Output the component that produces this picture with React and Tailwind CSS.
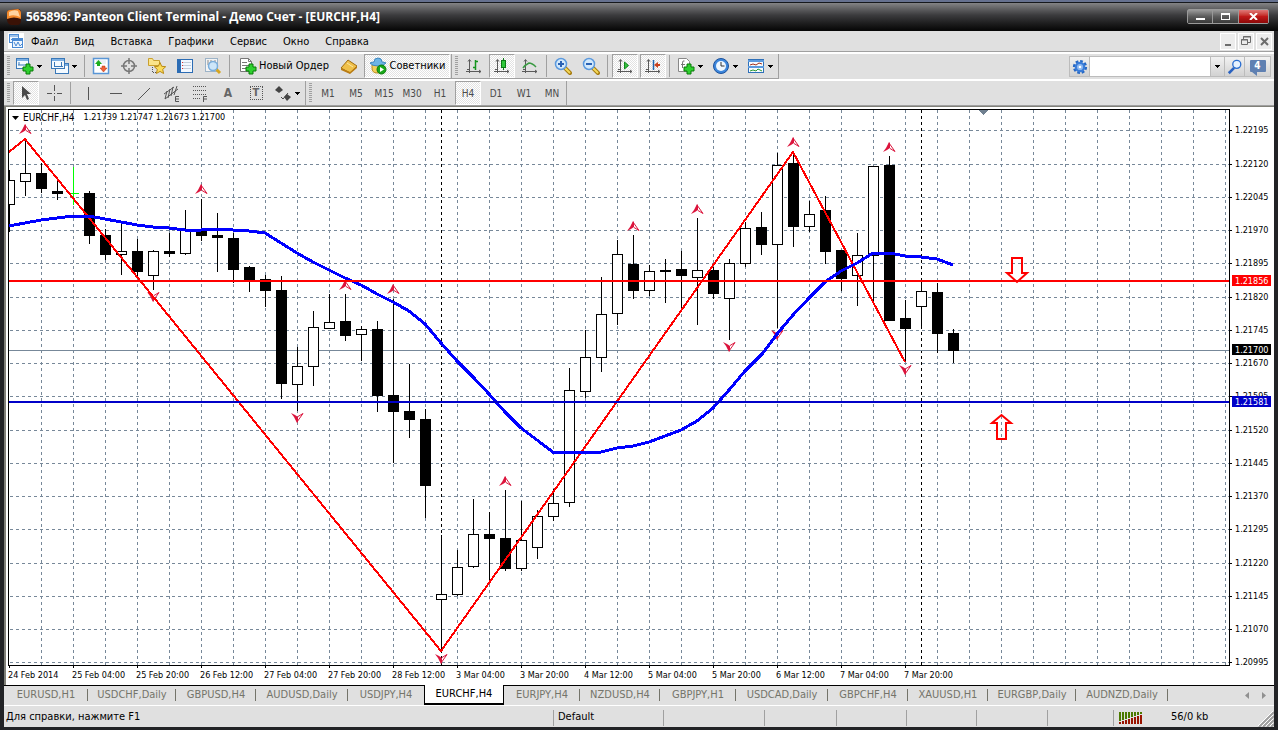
import React from 'react'
import clsx from 'clsx'

const MENU = ['Файл', 'Вид', 'Вставка', 'Графики', 'Сервис', 'Окно', 'Справка']
const TIMEFRAMES = ['M1', 'M5', 'M15', 'M30', 'H1', 'H4', 'D1', 'W1', 'MN']

const TABS = [
  ['EURUSD,H1', 'w-[84px]'],
  ['USDCHF,Daily', 'w-[88px]'],
  ['GBPUSD,H4', 'w-[80px]'],
  ['AUDUSD,Daily', 'w-[92px]'],
  ['USDJPY,H4', 'w-[76px]'],
  ['EURCHF,H4', 'w-[80px]'],
  ['EURJPY,H4', 'w-[76px]'],
  ['NZDUSD,H4', 'w-[80px]'],
  ['GBPJPY,H1', 'w-[76px]'],
  ['USDCAD,Daily', 'w-[92px]'],
  ['GBPCHF,H4', 'w-[80px]'],
  ['XAUUSD,H1', 'w-[80px]'],
  ['EURGBP,Daily', 'w-[88px]'],
  ['AUDNZD,Daily', 'w-[92px]'],
]
const ACTIVE_TAB = 'EURCHF,H4'

const TIMES = [
  '24 Feb 2014', '25 Feb 04:00', '25 Feb 20:00', '26 Feb 12:00', '27 Feb 04:00',
  '27 Feb 20:00', '28 Feb 12:00', '3 Mar 04:00', '3 Mar 20:00', '4 Mar 12:00',
  '5 Mar 04:00', '5 Mar 20:00', '6 Mar 12:00', '7 Mar 04:00', '7 Mar 20:00',
]

const PRICES = [
  [130, '1.22195'], [164, '1.22120'], [197, '1.22045'], [230, '1.21970'], [263, '1.21895'],
  [297, '1.21820'], [330, '1.21745'], [363, '1.21670'], [396, '1.21595'], [430, '1.21520'],
  [463, '1.21445'], [496, '1.21370'], [529, '1.21295'], [563, '1.21220'], [596, '1.21145'],
  [629, '1.21070'], [662, '1.20995'],
]

// high, low, body top, body bottom, bullish; one bar every 16px
const BARS = [
  [170, 232, 180, 205, 1], [140, 196, 173, 182, 1], [163, 193, 173, 189, 0], [180, 200, 191, 194, 0],
  null,
  [191, 244, 193, 236, 0], [229, 260, 235, 255, 0], [224, 275, 251, 255, 1], [239, 276, 251, 272, 0],
  [250, 290, 251, 276, 1], [233, 257, 251, 254, 0], [210, 255, 230, 254, 1], [199, 241, 231, 236, 0],
  [213, 272, 235, 238, 0], [233, 283, 238, 270, 0], [266, 292, 267, 280, 0], [275, 307, 279, 291, 0],
  [276, 399, 290, 384, 0], [347, 411, 366, 385, 1], [311, 386, 327, 367, 1], [294, 329, 322, 329, 1],
  [294, 341, 321, 336, 0], [326, 361, 329, 335, 1], [321, 412, 329, 396, 0], [299, 463, 395, 412, 0],
  [364, 438, 411, 420, 0], [409, 518, 419, 486, 0], [535, 651, 594, 600, 1], [550, 596, 567, 595, 1],
  [499, 568, 534, 567, 1], [512, 582, 534, 539, 0], [490, 571, 538, 569, 0], [501, 571, 540, 569, 1],
  [510, 559, 516, 548, 1], [489, 521, 503, 517, 1], [368, 507, 390, 503, 1], [330, 398, 357, 392, 1],
  [277, 372, 314, 358, 1], [240, 325, 254, 314, 1], [235, 299, 264, 291, 0], [265, 296, 271, 291, 1],
  [259, 303, 270, 272, 0], [251, 309, 269, 276, 0], [218, 325, 270, 278, 1], [267, 299, 270, 294, 0],
  [259, 340, 263, 299, 1], [222, 267, 228, 264, 1], [212, 255, 227, 245, 0], [153, 328, 165, 245, 1],
  [152, 247, 163, 227, 0], [201, 232, 214, 227, 1], [196, 264, 210, 252, 0], [250, 291, 250, 279, 0],
  [233, 306, 255, 276, 1], [166, 302, 166, 256, 1], [156, 321, 165, 321, 0], [300, 362, 318, 329, 0],
  [282, 328, 291, 307, 1], [283, 353, 292, 334, 0], [329, 363, 333, 351, 0],
]

const MA = '9,226 25,223 41,220 57,218 73,216 89,216 105,219 121,222 137,225 153,227 169,228 185,230 201,230 217,229 233,230 249,231 265,233 281,243 297,253 313,262 329,270 345,278 361,285 377,294 393,302 409,311 425,324 441,343 457,361 473,377 489,394 505,412 521,428 537,440 553,452 569,452 585,452 601,452 617,448 633,446 649,442 665,436 681,430 697,421 713,408 729,390 745,371 763,353 777,334 793,315 809,298 825,282 841,271 857,263 873,253 890,253 905,256 921,257 937,259 953,265'

const UP = [[25, 129], [201, 189], [345, 285], [393, 289], [505, 481], [633, 226], [697, 209], [793, 142], [889, 147]]
const DOWN = [[153, 297], [297, 418], [441, 659], [729, 347], [777, 335], [905, 370]]

/* ---------- small pieces ---------- */

function Grip() {
  return (
    <div className="ml-[3px] mr-[2px] my-[2px] w-[3px] self-stretch bg-[repeating-linear-gradient(to_bottom,#a0a0a0_0_1px,#e0e0e0_1px_2px)]" />
  )
}

function Sep({ className = 'ml-[2px] mr-[3px]' }) {
  return <div className={clsx('my-px w-px self-stretch bg-[#a0a0a0]', className)} />
}

function Tool({ label, pressed, className, caret, children }) {
  return (
    <button
      aria-label={label}
      className={clsx(
        'mx-px flex h-6 shrink-0 items-center border',
        className || (caret ? 'w-[33px]' : 'w-[26px]'),
        caret ? 'pl-[2px]' : 'justify-center',
        pressed
          ? 'border-[#a0a0a0] border-r-white border-b-white bg-[repeating-conic-gradient(#ffffff_0_25%,#e2e2e2_0_50%)] bg-[length:2px_2px]'
          : 'border-transparent'
      )}
    >
      {children}
      {caret && <Caret />}
    </button>
  )
}

function Caret() {
  return (
    <svg width="5" height="3" className="ml-[3px] shrink-0" shapeRendering="crispEdges">
      <path d="M0 0H5V1H4V2H3V3H2V2H1V1H0Z" fill="#000" />
    </svg>
  )
}

function Icon({ children, size = 18 }) {
  return (
    <svg width={size} height={size} viewBox="0 0 18 18" className="shrink-0">
      {children}
    </svg>
  )
}

function Plus({ x, y }) {
  return (
    <path
      transform={`translate(${x} ${y})`}
      d="M3.500 .5h4v3h3v4h-3v3h-4v-3h-3v-4h3z"
      fill="#2fd02f"
      stroke="#087a08"
    />
  )
}

function Win({ x, y, w, h }) {
  return (
    <g>
      <rect x={x + 0.5} y={y + 0.5} width={w} height={h} fill="#f4faff" stroke="#3a78b8" />
      <rect x={x + 1} y={y + 1} width={w - 1} height="2" fill="#7db0e4" />
    </g>
  )
}

function Axes() {
  return <path d="M4.500 3v13M1 14.500h15M3 4.500l1.500-2 1.500 2M14 13l2 1.500-2 1.500M2 12.500h2" fill="none" stroke="#5a5a5a" />
}

function Lens({ sign }) {
  return (
    <Icon>
      <path d="M11 11l5 5" stroke="#a67c10" strokeWidth="4" strokeLinecap="round" />
      <path d="M11.500 11.500l4 4" stroke="#f5d95a" strokeWidth="2" strokeLinecap="round" />
      <circle cx="7" cy="7" r="5.500" fill="#d3e9fb" stroke="#5c9ade" strokeWidth="1.500" />
      <path d={sign === '+' ? 'M4 7h6M7 4v6' : 'M4 7h6'} stroke="#2a62b4" strokeWidth="2" />
    </Icon>
  )
}

/* ---------- title + menu ---------- */

function TitleBar() {
  return (
    <header className="flex h-[31px] items-center border-t-2 border-[#66718f] bg-linear-to-b from-[#8a8a8c] via-[#3c3c3e] via-45% to-[#060606] pl-[6px] pr-[9px] shadow-[inset_0_1px_0_#16181c]">
      <svg width="16" height="18" viewBox="0 0 16 18">
        <path d="M1 5Q1 2 4 2L12 1Q15 1 15 5V13Q15 16 12 17L5 17Q1 16 1 11Z" fill="#3a1206" />
        <path d="M1 5Q1 2 4 2L12 1Q15 2 15 5V11Q8 8 1 11Z" fill="#f58a2c" />
        <path d="M3 4Q8 1 12 3L14 9Q8 6 3 8Z" fill="#ffd3a0" />
      </svg>
      <h1 className="ml-1 flex-1 whitespace-nowrap font-['Open_Sans','Noto_Sans',sans-serif] text-[12px] font-bold text-white">
        565896: Panteon Client Terminal - Демо Счет - [EURCHF,H4]
      </h1>
      <div className="flex h-[15px] rounded-[2px] border border-[#9a9a9a] bg-black">
        <button aria-label="Свернуть" className="flex w-[25px] items-end justify-center border-r border-[#999] bg-linear-to-b from-[#9b9b9b] via-[#5c5c5c] via-50% to-[#3a3a3a] pb-[3px]">
          <span className="h-[2px] w-[9px] bg-white" />
        </button>
        <button aria-label="Развернуть" className="flex w-[26px] items-center justify-center border-r border-[#999] bg-linear-to-b from-[#9b9b9b] via-[#5c5c5c] via-50% to-[#3a3a3a]">
          <span className="h-[7px] w-[9px] border border-t-2 border-white" />
        </button>
        <button aria-label="Закрыть" className="flex w-[29px] items-center justify-center bg-linear-to-b from-[#e07878] via-[#c01818] via-50% to-[#8c0808]">
          <svg width="9" height="7" viewBox="0 0 9 7">
            <path d="M1 0l7 7M8 0L1 7" stroke="#fff" strokeWidth="2" />
          </svg>
        </button>
      </div>
    </header>
  )
}

function MenuBar() {
  return (
    <nav className="flex h-5 items-center pl-1">
      <svg width="16" height="16" viewBox="0 0 16 16" className="bg-white">
        <rect x="1.500" y="1.500" width="9" height="8" fill="#eef6ff" stroke="#4a8ad4" />
        <path d="M1 3h10" stroke="#4a8ad4" />
        <path d="M3 7l1-1 1 1 1-2 2 2" fill="none" stroke="#4a8ad4" />
        <rect x="4.500" y="5.500" width="10" height="9" fill="#eef6ff" stroke="#4a8ad4" />
        <path d="M4 7h11" stroke="#4a8ad4" strokeWidth="2" />
        <path d="M6 9l2 4 2-4 2 4 2-2" fill="none" stroke="#4a8ad4" />
      </svg>
      {MENU.map((m) => (
        <button key={m} className="pt-[2px] pr-[9px] pl-[7px] text-[11px] text-black">{m}</button>
      ))}
      <div className="mr-[2px] ml-auto flex gap-[2px]">
        <button aria-label="Свернуть окно" className="flex h-[17px] w-[16px] items-end justify-center border border-white bg-[#ececec] pb-[3px]">
          <span className="h-[2px] w-[6px] bg-[#6c6c6c]" />
        </button>
        <button aria-label="Восстановить окно" className="flex h-[17px] w-[16px] items-center justify-center border border-white bg-[#ececec]">
          <svg width="10" height="10" viewBox="0 0 10 10" fill="none" stroke="#6c6c6c">
            <path d="M2.500 3V.5h7v6H7M2 1h8M.5 3.500h6v5h-6zM0 4h7" />
          </svg>
        </button>
        <button aria-label="Закрыть окно" className="flex h-[17px] w-[16px] items-center justify-center border border-white bg-[#ececec]">
          <svg width="9" height="9" viewBox="0 0 9 9">
            <path d="M1 1l7 7M8 1L1 8" stroke="#6c6c6c" strokeWidth="2" />
          </svg>
        </button>
      </div>
    </nav>
  )
}

/* ---------- toolbars ---------- */

function MainToolbar() {
  return (
    <div className="flex items-center border-t-2 border-white">
      <div className="flex items-center border-b border-r border-[#a0a0a0]">
        <Grip />
        <Tool label="Новый график" caret>
          <Icon>
            <Win x={0} y={1} w={12} h={10} />
            <path d="M3 8V5M2 8h8" stroke="#3a78b8" />
            <Plus x={6.5} y={6.5} />
          </Icon>
        </Tool>
        <Tool label="Профили" caret>
          <Icon>
            <Win x={4} y={6} w={13} h={10} />
            <Win x={0} y={1} w={13} h={10} />
            <path d="M3 9.500h9M3.500 5v5M10.500 5v5" stroke="#3a78b8" />
          </Icon>
        </Tool>
        <Sep className="mx-[2px]" />
        <Tool label="Обзор рынка">
          <Icon>
            <rect x="1.500" y="1.500" width="15" height="15" fill="#fff" stroke="#5a96d6" strokeWidth="1.500" />
            <path d="M4 4h10M4 6h10" stroke="#d8e4f0" />
            <path d="M6.500 3L10 7H8v2H5V7H3z" fill="#1fae1f" />
            <path d="M11.500 15L8 11h2V9h3v2h2z" fill="#f0623a" stroke="#b8340c" strokeWidth=".5" />
          </Icon>
        </Tool>
        <Tool label="Окно данных">
          <Icon>
            <circle cx="9" cy="9" r="5.500" fill="none" stroke="#777" strokeWidth="1.500" />
            <path d="M9 1v6M9 11v6M1 9h6M11 9h6" stroke="#777" strokeWidth="1.500" />
          </Icon>
        </Tool>
        <Tool label="Навигатор">
          <Icon>
            <path d="M.5 1.500h4l1 2h6v5h-11z" fill="#fbe48a" stroke="#c9a030" />
            <path d="M4.500 10v6M5 15.500h3" stroke="#555" strokeDasharray="1 1" />
            <path d="M12 5.500l1.700 3.800 4 .4-3 2.700.9 4.100-3.600-2.100-3.600 2.100.9-4.100-3-2.700 4-.4z" fill="#fbdc5c" stroke="#b98a14" />
          </Icon>
        </Tool>
        <Tool label="Терминал">
          <Icon>
            <rect x="1.500" y="2.500" width="15" height="13" fill="#f2f8ff" stroke="#2c6cb4" />
            <path d="M3.500 3v12" stroke="#2c6cb4" strokeWidth="3" />
            <path d="M7 5.500h8M7 8.500h8M7 11.500h8" stroke="#c2cfdc" />
            <path d="M6 5.500h1M6 8.500h1M6 11.500h1" stroke="#d33" />
          </Icon>
        </Tool>
        <Tool label="Тестер стратегий">
          <Icon>
            <rect x="1.500" y="1.500" width="12" height="13" fill="#f4f4f4" stroke="#9cb3c8" />
            <path d="M4 3v5M7 3v3M11 3v4" stroke="#888" />
            <path d="M12 12l4 4" stroke="#d6a520" strokeWidth="3" />
            <circle cx="9" cy="9" r="4.500" fill="#c9e4fa" fillOpacity=".9" stroke="#7aaedc" strokeWidth="1.500" />
          </Icon>
        </Tool>
        <Sep />
        <Tool label="Новый Ордер" className="w-[100px]">
          <Icon>
            <path d="M1.500 1.500h8l3 3v10h-11z" fill="#fff" stroke="#777" />
            <path d="M9.500 1.500v3h3M3 5.500h5M3 8.500h7M3 11.500h4" fill="none" stroke="#777" />
            <Plus x={6.5} y={6.5} />
          </Icon>
          <span className="ml-[2px] whitespace-nowrap text-[11px]">Новый Ордер</span>
        </Tool>
        <Tool label="MetaEditor">
          <Icon>
            <path d="M1 11L8 3l9 6-7 7z" fill="#efc04a" stroke="#a06c10" />
            <path d="M1 11v2l9 4 7-6V9l-7 6z" fill="#b97c14" />
            <path d="M7 6l6 4" stroke="#fbe7a4" />
          </Icon>
        </Tool>
        <Tool label="Советники" pressed className="w-[86px]">
          <Icon>
            <path d="M3 8q6-3 11 0v3q-1 5-6 5T3 11z" fill="#f2cd58" stroke="#b98b20" />
            <path d="M1 6q2-1 4-1 0-4 4-4t4 4q2 0 4 1-2 3-8 3T1 6z" fill="#6db4e4" stroke="#3f88c0" />
            <circle cx="12.500" cy="12.500" r="4.500" fill="#18a818" stroke="#0c7a0c" />
            <path d="M11 10l4 2.500-4 2.500z" fill="#fff" />
          </Icon>
          <span className="ml-[3px] whitespace-nowrap text-[11px]">Советники</span>
        </Tool>
      </div>
      <div className="flex items-center border-b border-r border-[#a0a0a0]">
        <Grip />
        <Tool label="Бары">
          <Icon>
            <Axes />
            <path d="M10.500 3v10M8 10.500h2.500M10.500 4.500H13" stroke="#15951f" strokeWidth="1.500" fill="none" />
          </Icon>
        </Tool>
        <Tool label="Свечи" pressed>
          <Icon>
            <Axes />
            <path d="M10.500 1v12" stroke="#0c7a14" />
            <rect x="8.500" y="3.500" width="4" height="7" fill="#2fc83a" stroke="#0c7a14" />
          </Icon>
        </Tool>
        <Tool label="Линия">
          <Icon>
            <Axes />
            <path d="M2 11Q4 8 8 6Q11 6 15 10" stroke="#3a9a42" strokeWidth="1.500" fill="none" />
          </Icon>
        </Tool>
        <Sep className="mx-[2px]" />
        <Tool label="Увеличить"><Lens sign="+" /></Tool>
        <Tool label="Уменьшить"><Lens sign="-" /></Tool>
        <Sep />
        <Tool label="Автопрокрутка" pressed>
          <Icon>
            <Axes />
            <path d="M8.500 5l4 3.500-4 3.500z" fill="#35c040" stroke="#138a1c" />
          </Icon>
        </Tool>
        <Tool label="Сдвиг графика" pressed>
          <Icon>
            <Axes />
            <path d="M9.500 3v10" stroke="#1d67b0" strokeWidth="1.500" />
            <path d="M10 8l4-3v2h2v2h-2v2z" fill="#c8401c" />
          </Icon>
        </Tool>
        <Sep />
        <Tool label="Индикаторы" caret>
          <Icon>
            <path d="M1.500 1.500h8l3 3v10h-11z" fill="#fff" stroke="#888" />
            <path d="M7.500 4q-2-1-2 2v5M4 7.500h4" stroke="#777" fill="none" />
            <Plus x={6.5} y={6.5} />
          </Icon>
        </Tool>
        <Tool label="Периоды" caret>
          <Icon>
            <circle cx="9" cy="9" r="7.500" fill="#3c86dc" stroke="#1c529c" />
            <circle cx="9" cy="9" r="5" fill="#eef7ff" />
            <path d="M9 5v4h3.500" stroke="#333" fill="none" />
          </Icon>
        </Tool>
        <Tool label="Шаблоны" caret>
          <Icon>
            <rect x="1.500" y="2.500" width="15" height="13" fill="#f6fbff" stroke="#2f70b8" />
            <path d="M1 4h16M1 10h16" stroke="#5b9ade" strokeWidth="2" />
            <path d="M3 8l3-1 3 1 3-2 3 1" stroke="#a33018" fill="none" />
            <path d="M3 14l3-1 3 1 2-2 4 2" stroke="#2c9a34" fill="none" />
          </Icon>
        </Tool>
      </div>
      <form className="ml-auto mr-[3px] flex h-[21px] items-stretch border border-[#bcbcbc] bg-[#bcbcbc]" onSubmit={(e) => e.preventDefault()}>
        <button type="button" aria-label="Настройки" className="flex w-[19px] items-center justify-center bg-linear-to-b from-[#f2f2f2] to-[#d2d2d2]">
          <Icon size={16}>
            <circle cx="9" cy="9" r="6.500" fill="none" stroke="#2668c4" strokeWidth="3" strokeDasharray="3 2" />
            <circle cx="9" cy="9" r="6" fill="#3a7cd8" />
            <circle cx="9" cy="9" r="3.500" fill="#8cb8f0" />
            <circle cx="9" cy="9" r="1.500" fill="#fff" />
          </Icon>
        </button>
        <input aria-label="Поиск" className="ml-px w-[120px] bg-white px-1 text-[11px] outline-none" />
        <button type="button" aria-label="История поиска" className="ml-px flex w-[13px] items-center justify-center bg-linear-to-b from-[#f2f2f2] to-[#d2d2d2] pr-[3px]">
          <Caret />
        </button>
        <button aria-label="Найти" className="ml-px flex w-[19px] items-center justify-center bg-linear-to-b from-[#f2f2f2] to-[#d2d2d2]">
          <Icon size={16}>
            <path d="M8 10l-6 6" stroke="#2a62c0" strokeWidth="3" />
            <circle cx="11" cy="6" r="4.500" fill="#e6f2ff" stroke="#2a6ed0" strokeWidth="1.500" />
          </Icon>
        </button>
        <button type="button" aria-label="Сообщения: 4" className="relative ml-px flex w-[25px] items-start justify-center bg-linear-to-b from-[#f2f2f2] to-[#d2d2d2] pt-[3px]">
          <span className="h-3 w-4 rounded-[1px] bg-[#5f80b2] text-center text-[10px] leading-3 font-bold text-white">4</span>
          <svg width="5" height="4" className="absolute bottom-0 left-[7px]"><path d="M0 0h5v4z" fill="#5f80b2" /></svg>
        </button>
      </form>
    </div>
  )
}

function DrawToolbar() {
  return (
    <div className="flex items-center border-t-2 border-b border-t-white border-b-[#a0a0a0]">
      <div className="flex items-center border-r border-[#a0a0a0]">
        <Grip />
        <Tool label="Курсор" pressed>
          <Icon><path d="M5 2v12l3-3 2 5 2-1-2-5h4z" fill="#4a4a4a" /></Icon>
        </Tool>
        <Tool label="Перекрестие">
          <Icon><path d="M9.500 1v6M9.500 12v5M2 9.500h5M12 9.500h5M9 9.500h1" stroke="#555" /></Icon>
        </Tool>
        <Sep />
        <Tool label="Вертикальная линия">
          <Icon><path d="M9.500 3v13" stroke="#555" /></Icon>
        </Tool>
        <Tool label="Горизонтальная линия">
          <Icon><path d="M3 9.500h12" stroke="#555" /></Icon>
        </Tool>
        <Tool label="Трендовая линия">
          <Icon><path d="M3 16L15 4" stroke="#555" /></Icon>
        </Tool>
        <Tool label="Канал">
          <Icon>
            <path d="M1 10L11 3M2 15L15 5M4 7l-2 8M7 5L5 14M10 3L8 12M14 2l-3 9" stroke="#555" fill="none" />
            <path d="M16 12.500h-3.500v5H16M12.500 15H16" stroke="#555" fill="none" />
          </Icon>
        </Tool>
        <Tool label="Фибоначчи">
          <Icon>
            <path d="M2 2.500h13M2 6.500h13M2 10.500h13M2 14.500h8" stroke="#555" strokeDasharray="1 1" />
            <path d="M16 12.500h-3.500V18M12.500 15H16" stroke="#555" fill="none" />
          </Icon>
        </Tool>
        <Tool label="Текст">
          <span className="text-[12px] font-bold text-[#666]">A</span>
        </Tool>
        <Tool label="Метка">
          <span className="flex h-[14px] w-[13px] items-center justify-center border border-dotted border-[#555] text-[11px] font-bold text-[#666]">T</span>
        </Tool>
        <Tool label="Стрелки" caret>
          <Icon>
            <path d="M5 2l4 4-4 3-4-3z" fill="#444" />
            <path d="M7 13l2 2 5-6" stroke="#444" fill="none" />
            <path d="M13 10l4 3-4 4-3-4z" fill="#444" />
          </Icon>
        </Tool>
      </div>
      <div className="flex items-center border-r border-[#a0a0a0]">
        <Grip />
        {TIMEFRAMES.map((t) => (
          <Tool key={t} label={t} pressed={t === 'H4'}>
            <span className="text-[10px] text-[#4a4a4a]">{t}</span>
          </Tool>
        ))}
      </div>
    </div>
  )
}

/* ---------- chart ---------- */

function Bar({ bar, i }) {
  const x = 9 + i * 16
  if (!bar) {
    return <path d={`M${x + 0.5} 167V205M${x - 5} 193.500H${x + 6}`} stroke="#00ff00" />
  }
  const [high, low, top, bottom, bull] = bar
  return (
    <g>
      <path d={`M${x + 0.5} ${high}V${low}`} stroke="#000" />
      <rect
        x={x - 4.5}
        y={top + 0.5}
        width="10"
        height={Math.max(bottom - top - 1, 1)}
        fill={bull ? '#fff' : '#000'}
        stroke="#000"
      />
    </g>
  )
}

function Fractal({ x, y, down }) {
  return (
    <g transform={`translate(${x} ${y})${down ? ' scale(1 -1)' : ''}`}>
      <path d="M0 -5L-3 1L-6 5L-2 3L1 1V-4Z" fill="#dc143c" />
      <path d="M0 -4L6 4.500L1 1.500" fill="none" stroke="#dc143c" />
    </g>
  )
}

function Chart() {
  return (
    <main className="flex flex-col border-t border-l-2 border-[#808078] bg-white pt-[2px] pl-[2px] text-[9px]">
      <div className="flex h-[557px]">
        <div className="relative min-w-0 flex-1 border border-black">
          <svg width="100%" height="100%" className="block">
            <defs>
              <pattern id="cols" x="1" y="0" width="32" height="6" patternUnits="userSpaceOnUse">
                <rect x="31" y="0" width="1" height="3" fill="#778899" />
              </pattern>
            </defs>
            <rect x="2" width="100%" height="100%" fill="url(#cols)" />
            <g transform="translate(-9 -110)">
              <g shapeRendering="crispEdges">
                {PRICES.map(([y]) => (
                  <line key={y} x1="10" x2="110%" y1={y + 0.5} y2={y + 0.5} stroke="#778899" strokeDasharray="3 3" />
                ))}
                <path d="M441.500 110V666M921.500 110V666" stroke="#000" strokeDasharray="3 3" />
                <line x1="9" x2="110%" y1="350.500" y2="350.500" stroke="#778899" />
                {BARS.map((b, i) => <Bar key={i} bar={b} i={i} />)}
                <path d="M978 110h11l-5.500 5z" fill="#708090" />
              </g>
              {UP.map(([x, y]) => <Fractal key={x} x={x} y={y} />)}
              {DOWN.map(([x, y]) => <Fractal key={x} x={x} y={y} down />)}
              <polyline points="9,152 25,139 441,651 793,152 905,362" fill="none" stroke="#f00" strokeWidth="2" shapeRendering="crispEdges" />
              <polyline points={MA} fill="none" stroke="#0000ff" strokeWidth="3" shapeRendering="crispEdges" />
              <line x1="9" x2="110%" y1="281" y2="281" stroke="#f00" strokeWidth="2" />
              <line x1="9" x2="110%" y1="402" y2="402" stroke="#0000c8" strokeWidth="2" />
              <path d="M1012 273V258H1022V273H1027L1017 282L1007 273Z" fill="none" stroke="#f00" strokeWidth="2" />
              <path d="M997 423V439H1006V423H1011L1001.500 415L992 423Z" fill="none" stroke="#f00" strokeWidth="2" />
            </g>
          </svg>
          <div className="absolute top-[2px] left-[3px] flex items-center gap-1 leading-[11px]">
            <svg width="7" height="4"><path d="M0 0h7L3.500 4z" /></svg>
            <span className="text-[10px]">EURCHF,H4</span>
            <span className="ml-[5px]">1.21739 1.21747 1.21673 1.21700</span>
          </div>
        </div>
        <svg width="44" height="557" className="block shrink-0 text-[9px]">
          <g transform="translate(-1230 -109)">
            {PRICES.map(([y, p]) => (
              <g key={p}>
                <path d={`M1230 ${y + 0.5}h2`} stroke="#000" />
                <text x="1235" y={y + 3}>{p}</text>
              </g>
            ))}
            <rect x="1232" y="275" width="39" height="11" fill="#f00" />
            <text x="1235" y="284" fill="#fff">1.21856</text>
            <rect x="1232" y="344" width="39" height="11" fill="#000" />
            <text x="1235" y="353" fill="#fff">1.21700</text>
            <rect x="1232" y="396" width="39" height="11" fill="#0000c8" />
            <text x="1235" y="405" fill="#fff">1.21581</text>
          </g>
        </svg>
      </div>
      <div className="flex h-[19px] overflow-hidden">
        {TIMES.map((t) => (
          <div key={t} className="w-16 shrink-0 whitespace-nowrap">
            <div className="ml-px h-[2px] w-px bg-black" />
            <div className="leading-[14px]">{t}</div>
          </div>
        ))}
      </div>
    </main>
  )
}

/* ---------- bottom ---------- */

function TabStrip() {
  return (
    <div className="flex h-[21px] items-start border-t border-black border-b border-b-white">
      {TABS.map(([t, w], i) => {
        const active = t === ACTIVE_TAB
        const next = TABS[i + 1]
        const line = !active && !(next && next[0] === ACTIVE_TAB)
        return (
          <button
            key={t}
            className={clsx(
              'relative shrink-0 whitespace-nowrap text-center text-[11px]',
              w,
              active
                ? '-mt-px h-5 border-x border-b-2 border-black bg-white text-black'
                : 'h-[18px] text-[#74746a]'
            )}
          >
            {t}
            {line && <span className="absolute top-[3px] right-0 h-3 w-px bg-[#74746a]" />}
          </button>
        )
      })}
      <div className="mt-[6px] mr-2 ml-auto flex gap-[13px]">
        <button aria-label="Назад">
          <svg width="4" height="7" className="block"><path d="M4 0v7L0 3.500z" fill="#909090" /></svg>
        </button>
        <button aria-label="Вперед">
          <svg width="4" height="7" className="block"><path d="M0 0v7l4-3.500z" fill="#909090" /></svg>
        </button>
      </div>
    </div>
  )
}

const CELLS = ['w-[101px]', 'w-[72px]', 'w-[70px]', 'w-[70px]', 'w-[71px]', 'w-[66px]']

function StatusBar() {
  return (
    <footer className="flex h-[21px] items-center pt-[2px] text-[11px]">
      <span className="flex-1 pl-[2px]">Для справки, нажмите F1</span>
      <span className="flex h-4 w-[110px] items-center border-l border-[#a0a0a0] pl-1">Default</span>
      {CELLS.map((w, i) => (
        <span key={i} className={clsx('h-4 border-l border-[#a0a0a0]', w)} />
      ))}
      <div className="flex h-4 w-[144px] items-center border-l border-[#a0a0a0] pl-[5px]">
        <svg width="24" height="12" shapeRendering="crispEdges">
          {[0, 1, 2, 3, 4, 5, 6, 7].map((i) => (
            <g key={i}>
              <rect x={i * 3} y="0" width="2" height={9 - i} fill="#4c7a00" />
              <rect x={i * 3} y={10 - i} width="2" height={2 + i} fill="#9a1400" />
            </g>
          ))}
        </svg>
        <span className="ml-[28px]">56/0 kb</span>
      </div>
      <svg width="17" height="17" className="shrink-0 self-end">
        <path d="M2 17L17 2M6 17L17 6M10 17l7-7M14 17l3-3" stroke="#a0a0a0" strokeWidth="2" />
        <path d="M1 16L16 1M5 16L16 5M9 16l7-7M13 16l3-3" stroke="#fff" />
      </svg>
    </footer>
  )
}

export default function App() {
  return (
    <div className="flex w-full flex-col bg-[#222326] font-['DejaVu_Sans_Condensed','DejaVu_Sans',sans-serif]">
      <TitleBar />
      <div className="mr-1 mb-[3px] ml-1 bg-[#e0e0e0]">
        <MenuBar />
        <div className="h-px bg-[#a0a0a0]" />
        <MainToolbar />
        <DrawToolbar />
        <Chart />
        <TabStrip />
        <StatusBar />
      </div>
    </div>
  )
}
